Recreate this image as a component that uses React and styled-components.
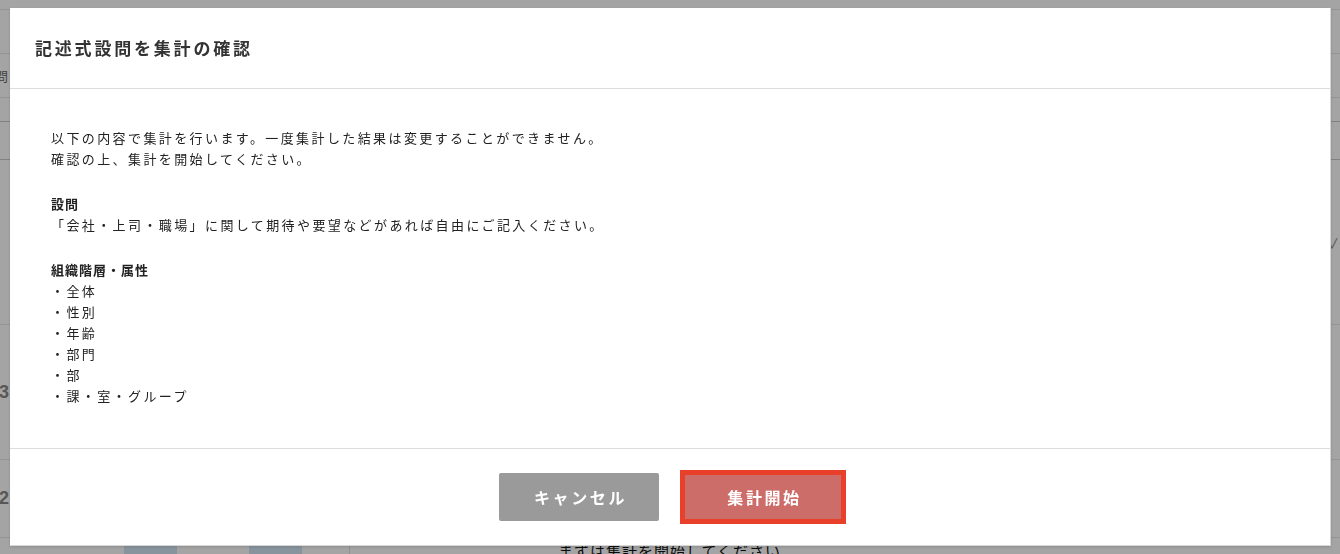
import React from "react";
import styled, { createGlobalStyle } from "styled-components";

const Global = createGlobalStyle`
  html, body { margin: 0; padding: 0; }
  body {
    font-family: "Noto Sans CJK JP", "Noto Sans", "Liberation Sans", sans-serif;
    color: #222;
    background: #fff;
    overflow: hidden;
  }
  * { box-sizing: border-box; }
`;

/* ---------- background page (under the overlay) ---------- */
const Page = styled.div`
  width: 1340px;
  height: 554px;
  display: flex;
  flex-direction: column;
  overflow: hidden;
  background: #fff;
`;

const BgRow = styled.div`
  height: ${(p) => p.$h}px;
  flex: none;
  border-bottom: 1px solid ${(p) => (p.$dark ? "#c9c9c9" : "#e8e8e8")};
  display: flex;
  align-items: center;
  justify-content: space-between;
  padding: 0 1px;
  font-size: 13px;
  color: #666;
`;

const AxisLabel = styled.span`
  font-family: "Liberation Sans", sans-serif;
  font-weight: bold;
  font-size: 18px;
  color: #888;
  margin-left: -2px;
`;

const Chevron = styled.span`
  font-size: 14px;
  color: #888;
`;

const BgBottom = styled.div`
  flex: none;
  height: 30px;
  display: flex;
`;

const BgLeft = styled.div`
  width: 350px;
  display: flex;
  gap: 72px;
  padding-left: 124px;
  border-right: 1px solid #e0e0e0;
`;

const BgBar = styled.div`
  width: 53px;
  height: 30px;
  background: #d3e6f5;
`;

const BgMain = styled.div`
  flex: 1;
  padding: 2px 0 0 208px;
  font-size: 15px;
  color: #111;
  letter-spacing: 1px;
`;

/* ---------- overlay + modal ---------- */
const Overlay = styled.div`
  position: fixed;
  inset: 0;
  background: rgba(0, 0, 0, 0.355);
  padding: 8px 9px 0 10px;
  display: flex;
  flex-direction: column;
  align-items: stretch;
`;

const Modal = styled.div`
  background: #fff;
  border: 1px solid #d6d6d6;
  border-left: none;
  border-top: none;
  box-shadow: 0 1px 3px rgba(0, 0, 0, 0.15);
  display: flex;
  flex-direction: column;
`;

const Header = styled.div`
  height: 81px;
  display: flex;
  align-items: center;
  padding: 0 25px 1px;
  border-bottom: 1px solid #dcdcdc;
`;

const Title = styled.h2`
  margin: 0;
  font-size: 17px;
  font-weight: 700;
  letter-spacing: 2.8px;
  color: #333;
`;

const Body = styled.div`
  padding: 38px 40px 42px 41px;
  font-size: 13px;
  line-height: 21px;
  color: #222;
  border-bottom: 1px solid #dcdcdc;
`;

const Para = styled.div`
  & + & {
    margin-top: 24px;
  }
`;

const Line = styled.div`
  font-weight: ${(p) => (p.$bold ? 700 : 400)};
  letter-spacing: ${(p) => (p.$bold ? "1px" : "2.4px")};
`;

const Footer = styled.div`
  height: 96px;
  display: flex;
  align-items: center;
  justify-content: center;
  gap: 24px;
  padding-left: 2px;
`;

const Button = styled.button`
  width: 160px;
  height: 48px;
  border-radius: ${(p) => (p.$primary ? "0" : "2px")};
  border: ${(p) => (p.$primary ? "2px solid #e8402a" : "none")};
  outline: ${(p) => (p.$primary ? "3px solid #e8402a" : "none")};
  background: ${(p) => (p.$primary ? "#cd6d6a" : "#9a9a9a")};
  color: #fff;
  font-family: inherit;
  font-size: 16px;
  font-weight: 700;
  letter-spacing: 2.6px;
  padding: 0 0 0 3px;
  cursor: pointer;
`;

const groups = ["全体", "性別", "年齢", "部門", "部", "課・室・グループ"];

export default function App() {
  return (
    <>
      <Global />
      <Page>
        <BgRow $h={10} />
        <BgRow $h={44}>
          <span />
        </BgRow>
        <BgRow $h={44}>
          <span style={{ marginLeft: -6 }}>問</span>
        </BgRow>
        <BgRow $h={24} $dark />
        <BgRow $h={38} $dark />
        <BgRow $h={165}>
          <span />
          <Chevron>∨</Chevron>
        </BgRow>
        <BgRow $h={135}>
          <AxisLabel>3</AxisLabel>
        </BgRow>
        <BgRow $h={78}>
          <AxisLabel>2</AxisLabel>
        </BgRow>
        <BgBottom>
          <BgLeft>
            <BgBar />
            <BgBar />
          </BgLeft>
          <BgMain>まずは集計を開始してください</BgMain>
        </BgBottom>
      </Page>
      <Overlay>
        <Modal>
          <Header>
            <Title>記述式設問を集計の確認</Title>
          </Header>
          <Body>
            <Para>
              <Line>以下の内容で集計を行います。一度集計した結果は変更することができません。</Line>
              <Line>確認の上、集計を開始してください。</Line>
            </Para>
            <Para>
              <Line $bold>設問</Line>
              <Line>「会社・上司・職場」に関して期待や要望などがあれば自由にご記入ください。</Line>
            </Para>
            <Para>
              <Line $bold>組織階層・属性</Line>
              {groups.map((g) => (
                <Line key={g}>・{g}</Line>
              ))}
            </Para>
          </Body>
          <Footer>
            <Button type="button">キャンセル</Button>
            <Button type="button" $primary>
              集計開始
            </Button>
          </Footer>
        </Modal>
      </Overlay>
    </>
  );
}
